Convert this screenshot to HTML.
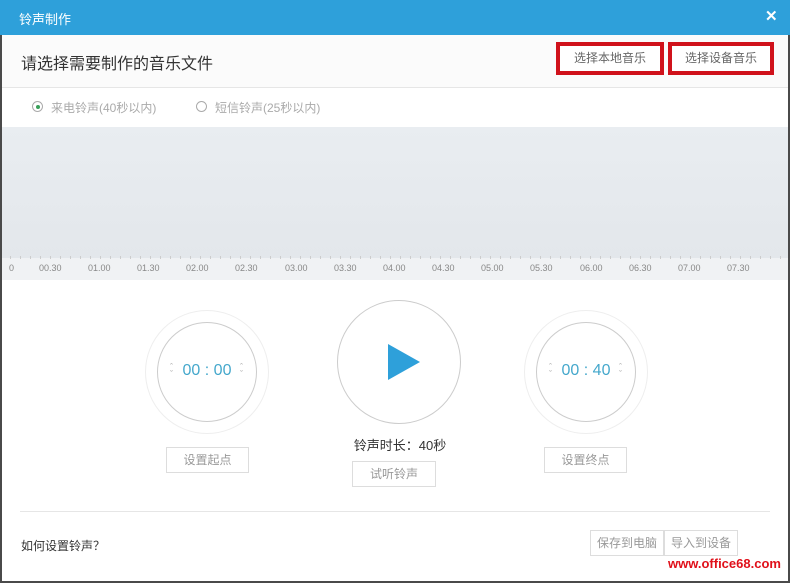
<!DOCTYPE html>
<html><head><meta charset="utf-8"><style>
*{margin:0;padding:0;box-sizing:border-box}
body{width:790px;height:583px;overflow:hidden;background:#fff;font-family:"Liberation Sans","Noto Sans CJK SC",sans-serif;position:relative;color:#333}
.a{position:absolute}
.btn{position:absolute;border:1px solid #ddd;background:#fff;color:#999;font-size:12px;text-align:center}
.circ{position:absolute;border-radius:50%}
</style></head><body>
<div class="a" style="left:0;top:0;width:790px;height:583px;border:2px solid #4a4a4a;border-top:none"></div>
<div class="a" style="left:0;top:0;width:790px;height:35px;background:#2ea0da"></div>
<div class="a" style="left:19px;top:9px;color:#fff;font-size:13px">铃声制作</div>
<div class="a" style="left:765px;top:7px;color:#fff;font-size:15px;font-weight:bold">✕</div>
<div class="a" style="left:2px;top:35px;width:786px;height:53px;background:#fbfbfb;border-bottom:1px solid #e6e6e6"></div>
<div class="a" style="left:21px;top:50px;font-size:16px;color:#333">请选择需要制作的音乐文件</div>
<div class="a" style="left:556px;top:42px;width:108px;height:33px;border:4px solid #d0121b;background:#fff;font-size:12px;color:#666;text-align:center;line-height:25px">选择本地音乐</div>
<div class="a" style="left:668px;top:42px;width:106px;height:33px;border:4px solid #d0121b;background:#fff;font-size:12px;color:#666;text-align:center;line-height:25px">选择设备音乐</div>
<div class="a" style="left:32px;top:101px;width:11px;height:11px;border:1px solid #aaa;border-radius:50%"></div>
<div class="a" style="left:35.5px;top:104.5px;width:4px;height:4px;background:#3aa05a;border-radius:50%"></div>
<div class="a" style="left:51px;top:99px;font-size:12px;color:#aaa">来电铃声(40秒以内)</div>
<div class="a" style="left:196px;top:101px;width:11px;height:11px;border:1px solid #aaa;border-radius:50%"></div>
<div class="a" style="left:215px;top:99px;font-size:12px;color:#aaa">短信铃声(25秒以内)</div>
<div class="a" style="left:2px;top:127px;width:786px;height:131px;background:linear-gradient(#e9edf1,#e3e7eb)"></div>
<div class="a" style="left:2px;top:258px;width:786px;height:22px;background:#f0f2f4"></div>
<div class="a" style="left:10px;top:256px;width:778px;height:3px;background:repeating-linear-gradient(90deg,#ccc 0 1px,transparent 1px 10px)"></div>
<div class="a" style="left:0;top:263px;width:790px;font-size:9px;color:#888">
<span class="a" style="left:9px">0</span><span class="a" style="left:39px">00.30</span><span class="a" style="left:88px">01.00</span><span class="a" style="left:137px">01.30</span><span class="a" style="left:186px">02.00</span><span class="a" style="left:235px">02.30</span><span class="a" style="left:285px">03.00</span><span class="a" style="left:334px">03.30</span><span class="a" style="left:383px">04.00</span><span class="a" style="left:432px">04.30</span><span class="a" style="left:481px">05.00</span><span class="a" style="left:530px">05.30</span><span class="a" style="left:580px">06.00</span><span class="a" style="left:629px">06.30</span><span class="a" style="left:678px">07.00</span><span class="a" style="left:727px">07.30</span></div>
<div class="circ" style="left:145px;top:310px;width:124px;height:124px;border:1px solid #eee"></div>
<div class="circ" style="left:157px;top:322px;width:100px;height:100px;border:1px solid #ccc"></div>
<div class="a" style="left:157px;top:362px;width:100px;text-align:center;font-size:16px;color:#45a8cc">00 : 00</div>
<div class="a" style="left:170px;top:364px;font-size:9px;color:#aaa;line-height:7px">ˆ<br>ˇ</div>
<div class="a" style="left:240px;top:364px;font-size:9px;color:#aaa;line-height:7px">ˆ<br>ˇ</div>
<div class="circ" style="left:524px;top:310px;width:124px;height:124px;border:1px solid #eee"></div>
<div class="circ" style="left:536px;top:322px;width:100px;height:100px;border:1px solid #ccc"></div>
<div class="a" style="left:536px;top:362px;width:100px;text-align:center;font-size:16px;color:#45a8cc">00 : 40</div>
<div class="a" style="left:549px;top:364px;font-size:9px;color:#aaa;line-height:7px">ˆ<br>ˇ</div>
<div class="a" style="left:619px;top:364px;font-size:9px;color:#aaa;line-height:7px">ˆ<br>ˇ</div>
<div class="circ" style="left:337px;top:300px;width:124px;height:124px;border:1px solid #ccc"></div>
<svg class="a" style="left:388px;top:344px" width="32" height="36"><polygon points="0,0 32,18 0,36" fill="#2ea0da"/></svg>
<div class="btn" style="left:166px;top:447px;width:83px;height:26px;line-height:24px">设置起点</div>
<div class="btn" style="left:544px;top:447px;width:83px;height:26px;line-height:24px">设置终点</div>
<div class="a" style="left:330px;top:435px;width:140px;text-align:center;font-size:13px;color:#333">铃声时长：40秒</div>
<div class="btn" style="left:352px;top:461px;width:84px;height:26px;line-height:24px">试听铃声</div>
<div class="a" style="left:20px;top:511px;width:750px;height:1px;background:#e6e6e6"></div>
<div class="a" style="left:21px;top:537px;font-size:12px;color:#333">如何设置铃声？</div>
<div class="btn" style="left:590px;top:530px;width:74px;height:26px;line-height:24px">保存到电脑</div>
<div class="btn" style="left:664px;top:530px;width:74px;height:26px;line-height:24px">导入到设备</div>
<div class="a" style="left:668px;top:556px;font-size:13px;color:#e0101a;font-weight:bold">www.office68.com</div>
</body></html>
